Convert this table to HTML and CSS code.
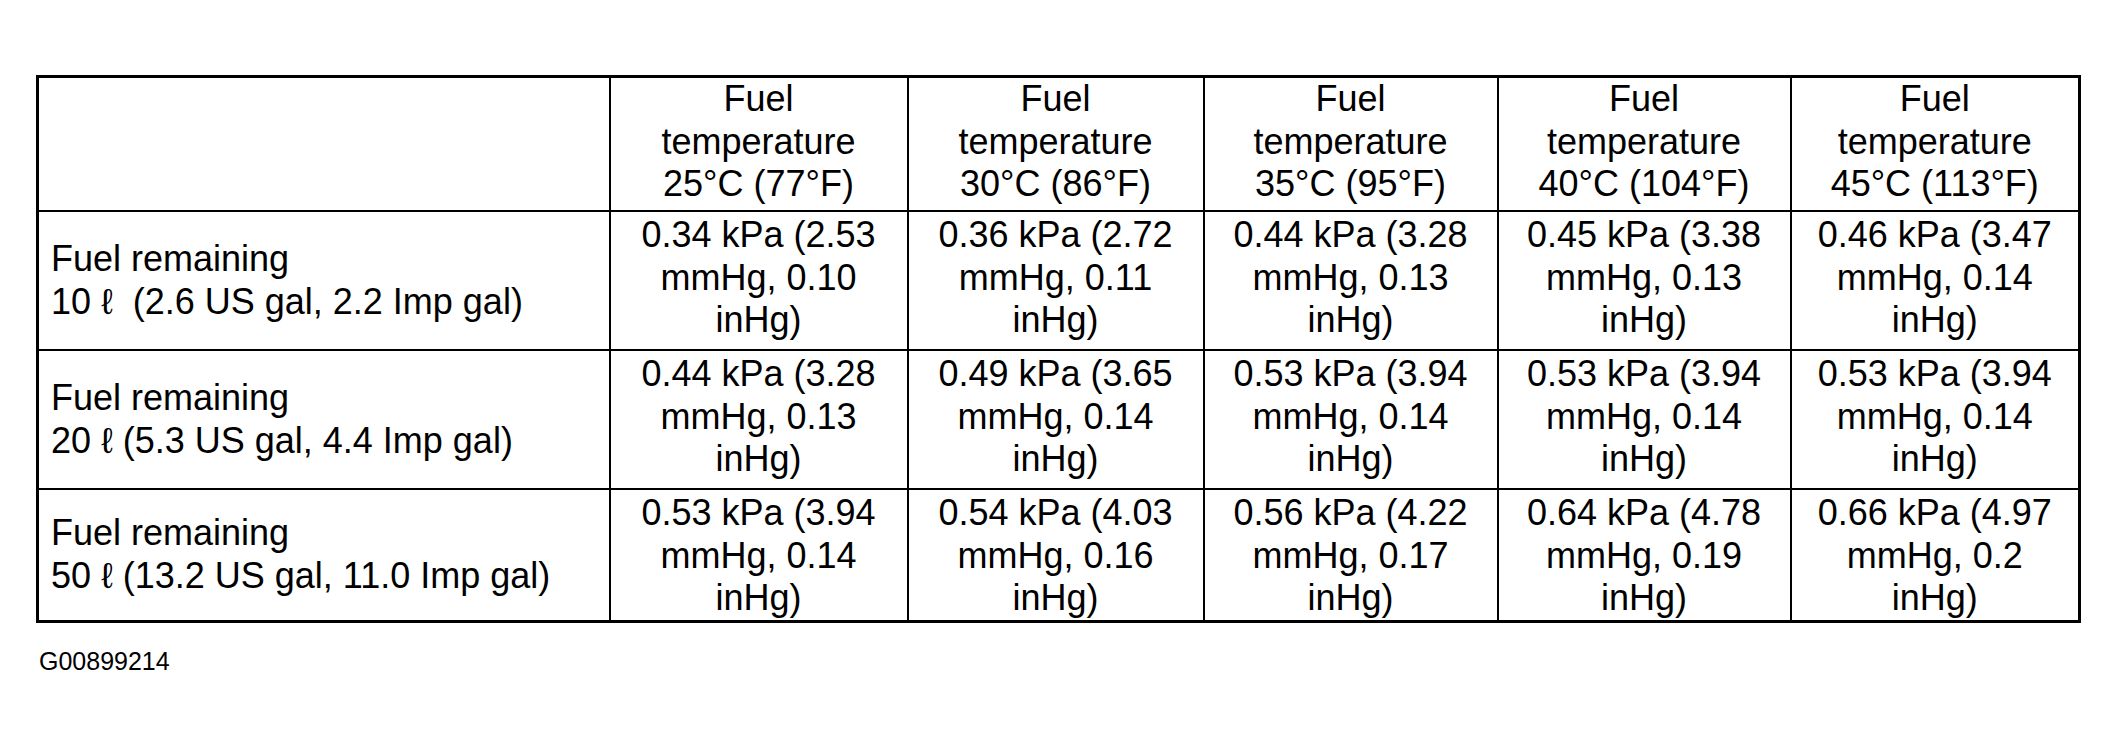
FILE: index.html
```html
<!DOCTYPE html>
<html>
<head>
<meta charset="utf-8">
<link rel="stylesheet" href="styles.css">
</head>
<body>
<div class="page">
<table class="spec">
  <colgroup>
    <col class="c0"><col class="c1"><col class="c2"><col class="c3"><col class="c4"><col class="c5">
  </colgroup>
  <tr class="head">
    <td></td>
    <td>Fuel<br>temperature<br>25°C (77°F)</td>
    <td>Fuel<br>temperature<br>30°C (86°F)</td>
    <td>Fuel<br>temperature<br>35°C (95°F)</td>
    <td>Fuel<br>temperature<br>40°C (104°F)</td>
    <td>Fuel<br>temperature<br>45°C (113°F)</td>
  </tr>
  <tr class="r1">
    <td class="label">Fuel remaining<br>10 ℓ&nbsp; (2.6 US gal, 2.2 Imp gal)</td>
    <td>0.34 kPa (2.53<br>mmHg, 0.10<br>inHg)</td>
    <td>0.36 kPa (2.72<br>mmHg, 0.11<br>inHg)</td>
    <td>0.44 kPa (3.28<br>mmHg, 0.13<br>inHg)</td>
    <td>0.45 kPa (3.38<br>mmHg, 0.13<br>inHg)</td>
    <td>0.46 kPa (3.47<br>mmHg, 0.14<br>inHg)</td>
  </tr>
  <tr class="r2">
    <td class="label">Fuel remaining<br>20 ℓ (5.3 US gal, 4.4 Imp gal)</td>
    <td>0.44 kPa (3.28<br>mmHg, 0.13<br>inHg)</td>
    <td>0.49 kPa (3.65<br>mmHg, 0.14<br>inHg)</td>
    <td>0.53 kPa (3.94<br>mmHg, 0.14<br>inHg)</td>
    <td>0.53 kPa (3.94<br>mmHg, 0.14<br>inHg)</td>
    <td>0.53 kPa (3.94<br>mmHg, 0.14<br>inHg)</td>
  </tr>
  <tr class="r3">
    <td class="label">Fuel remaining<br>50 ℓ (13.2 US gal, 11.0 Imp gal)</td>
    <td>0.53 kPa (3.94<br>mmHg, 0.14<br>inHg)</td>
    <td>0.54 kPa (4.03<br>mmHg, 0.16<br>inHg)</td>
    <td>0.56 kPa (4.22<br>mmHg, 0.17<br>inHg)</td>
    <td>0.64 kPa (4.78<br>mmHg, 0.19<br>inHg)</td>
    <td>0.66 kPa (4.97<br>mmHg, 0.2<br>inHg)</td>
  </tr>
</table>
<div class="caption">G00899214</div>
</div>
</body>
</html>
```
FILE: styles.css
```css
html, body {
  margin: 0;
  padding: 0;
  background: #ffffff;
}
body {
  font-family: "Liberation Sans", Arial, "DejaVu Sans", sans-serif;
  color: #000;
}
.page {
  padding: 75px 0 0 36px;
}
.spec {
  border-collapse: collapse;
  table-layout: fixed;
  width: 2042px;
  border: 3px solid #000;
  font-size: 36px;
  line-height: 42.5px;
}
.c0 { width: 572px; }
.c1 { width: 298px; }
.c2 { width: 296px; }
.c3 { width: 294px; }
.c4 { width: 293px; }
.c5 { width: 289px; }
.spec td {
  border-left: 2px solid #000;
  border-top: 2px solid #000;
  text-align: center;
  vertical-align: top;
  padding: 2px 0 0 0;
  white-space: nowrap;
}
.spec .head td {
  padding-top: 0;
  height: 132px;
}
.spec td.label {
  text-align: left;
  vertical-align: middle;
  padding: 0 0 0 12px;
}
.r1 td { height: 135px; }
.r2 td { height: 135px; }
.r3 td { height: 127px; }
.caption {
  margin-top: 24px;
  margin-left: 3px;
  font-size: 25px;
}
```
